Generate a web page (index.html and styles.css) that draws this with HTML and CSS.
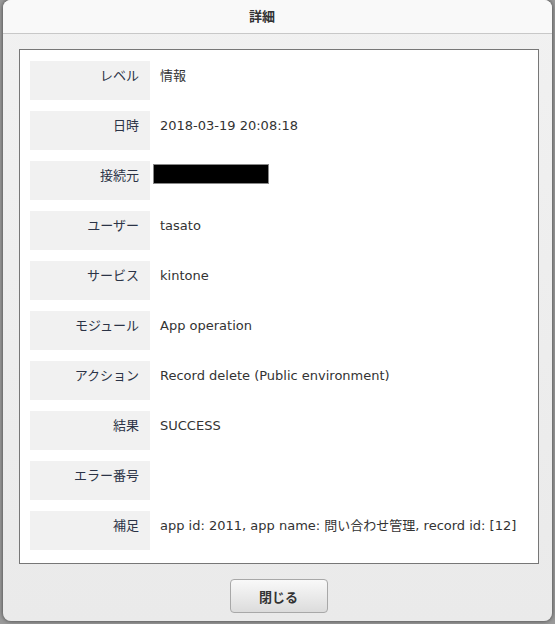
FILE: index.html
```html
<!DOCTYPE html>
<html lang="ja">
<head>
    <meta charset="UTF-8">
    <title>詳細</title>
    <link rel="stylesheet" href="styles.css">
</head>
<body>
    <div class="dialog">
        <div class="dialog-header">詳細</div>
        <div class="dialog-body">
            <div class="detail-box">
                <div class="row"><div class="label">レベル</div><div class="value">情報</div></div>
                <div class="row"><div class="label">日時</div><div class="value">2018-03-19 20:08:18</div></div>
                <div class="row"><div class="label">接続元</div><div class="value"><span class="redacted"></span></div></div>
                <div class="row"><div class="label">ユーザー</div><div class="value">tasato</div></div>
                <div class="row"><div class="label">サービス</div><div class="value">kintone</div></div>
                <div class="row"><div class="label">モジュール</div><div class="value">App operation</div></div>
                <div class="row"><div class="label">アクション</div><div class="value">Record delete (Public environment)</div></div>
                <div class="row"><div class="label">結果</div><div class="value">SUCCESS</div></div>
                <div class="row"><div class="label">エラー番号</div><div class="value"></div></div>
                <div class="row"><div class="label">補足</div><div class="value">app id: 2011, app name: 問い合わせ管理, record id: [12]</div></div>
            </div>
        </div>
        <div class="dialog-footer">
            <button class="close-btn">閉じる</button>
        </div>
    </div>
</body>
</html>
```

FILE: styles.css
```css
html, body {
    margin: 0;
    padding: 0;
}
body {
    background-color: #9a9a9a;
    font-family: "DejaVu Sans", "Noto Sans CJK JP", sans-serif;
    font-size: 13px;
    color: #333;
    height: 624px;
    overflow: hidden;
}
.dialog {
    width: 549px;
    height: 621px;
    margin-left: 3px;
    border-radius: 8px;
    background: linear-gradient(#f1f1f1, #eaeaea);
    box-shadow: 0 0 4px rgba(0,0,0,0.6);
    display: flex;
    flex-direction: column;
    overflow: hidden;
}
.dialog-header {
    height: 34px;
    line-height: 33px;
    background-color: #f9f9f9;
    border-bottom: 1px solid #c8c8c8;
    text-align: center;
    padding-right: 31px;
    font-weight: bold;
    font-size: 13px;
    color: #333;
    box-sizing: border-box;
}
.dialog-body {
    padding: 15px 0 0 16px;
}
.detail-box {
    width: 520px;
    height: 515px;
    box-sizing: border-box;
    background-color: #fff;
    border: 1px solid #777;
    padding: 11px 10px 0 10px;
    display: flex;
    flex-direction: column;
    gap: 11px;
}
.row {
    display: flex;
    height: 39px;
}
.label {
    width: 120px;
    flex: none;
    background-color: #f1f1f1;
    text-align: right;
    padding: 6px 11px 0 0;
    box-sizing: border-box;
    line-height: 18px;
    color: #2b3346;
}
.value {
    padding: 6px 0 0 10px;
    line-height: 18px;
}
.redacted {
    display: block;
    width: 114px;
    height: 18px;
    margin: -3px 0 0 -7px;
    background-color: #000;
    border: 1px solid #888;
}
.dialog-footer {
    padding-top: 15px;
    text-align: center;
    padding-left: 2px;
}
.close-btn {
    width: 98px;
    height: 34px;
    border: 1px solid #a8a8a8;
    border-radius: 4px;
    background: linear-gradient(#f9f9f9, #dcdcdc);
    font-family: "Noto Sans CJK JP", sans-serif;
    font-weight: bold;
    font-size: 13px;
    color: #333;
    cursor: pointer;
}
```
